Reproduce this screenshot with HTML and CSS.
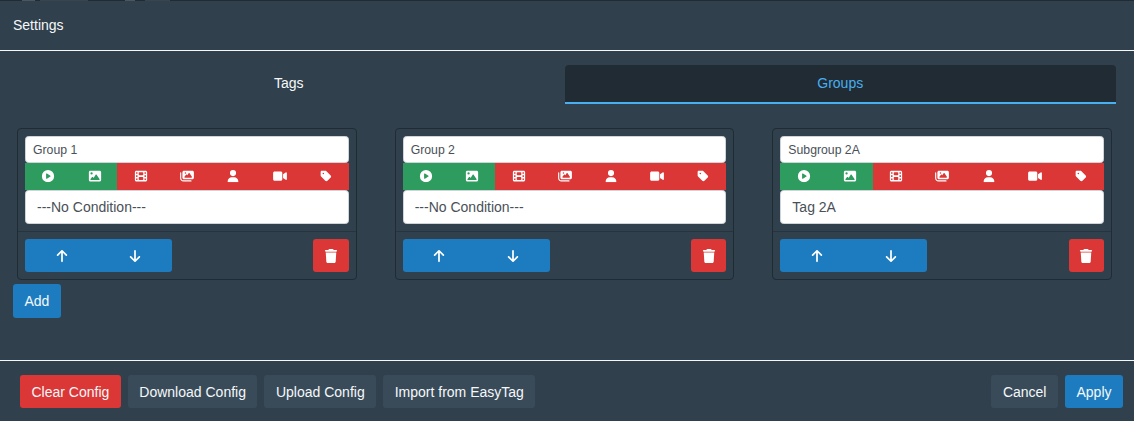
FILE: index.html
```html
<!DOCTYPE html>
<html lang="en">
<head>
<meta charset="utf-8">
<title>Settings</title>
<link rel="stylesheet" href="styles.css">
</head>
<body>
<svg class="defs" aria-hidden="true">
<symbol id="i-play" viewBox="0 0 512 512"><path d="M0 256a256 256 0 1 1 512 0A256 256 0 1 1 0 256zM188.3 147.1c-7.6 4.2-12.3 12.3-12.3 20.9V344c0 8.7 4.7 16.7 12.3 20.9s16.8 4.1 24.3-.5l144-88c7.1-4.4 11.5-12.1 11.5-20.5s-4.4-16.1-11.5-20.5l-144-88c-7.4-4.5-16.7-4.7-24.3-.5z"/></symbol>
<symbol id="i-image" viewBox="0 0 512 512"><path d="M0 96C0 60.7 28.7 32 64 32H448c35.3 0 64 28.7 64 64V416c0 35.3-28.7 64-64 64H64c-35.3 0-64-28.7-64-64V96zM323.8 202.5c-4.5-6.6-11.9-10.5-19.8-10.5s-15.4 3.9-19.8 10.5l-87 127.6L170.7 297c-4.6-5.7-11.5-9-18.7-9s-14.2 3.3-18.7 9l-64 80c-5.8 7.2-6.9 17.1-2.9 25.4s12.4 13.6 21.6 13.6h96 32H424c8.9 0 17.1-4.9 21.2-12.8s3.6-17.4-1.4-24.7l-120-176zM112 192a48 48 0 1 0 0-96 48 48 0 1 0 0 96z"/></symbol>
<symbol id="i-film" viewBox="0 0 512 512"><path d="M0 96C0 60.7 28.7 32 64 32H448c35.3 0 64 28.7 64 64V416c0 35.3-28.7 64-64 64H64c-35.3 0-64-28.7-64-64V96zM48 368v32c0 8.8 7.2 16 16 16H96c8.8 0 16-7.2 16-16V368c0-8.8-7.2-16-16-16H64c-8.8 0-16 7.2-16 16zm368-16c-8.8 0-16 7.2-16 16v32c0 8.8 7.2 16 16 16h32c8.8 0 16-7.2 16-16V368c0-8.8-7.2-16-16-16H416zM48 240v32c0 8.8 7.2 16 16 16H96c8.8 0 16-7.2 16-16V240c0-8.8-7.2-16-16-16H64c-8.8 0-16 7.2-16 16zm368-16c-8.8 0-16 7.2-16 16v32c0 8.8 7.2 16 16 16h32c8.8 0 16-7.2 16-16V240c0-8.8-7.2-16-16-16H416zM48 112v32c0 8.8 7.2 16 16 16H96c8.8 0 16-7.2 16-16V112c0-8.8-7.2-16-16-16H64c-8.8 0-16 7.2-16 16zM416 96c-8.8 0-16 7.2-16 16v32c0 8.8 7.2 16 16 16h32c8.8 0 16-7.2 16-16V112c0-8.8-7.2-16-16-16H416zM160 128v64c0 17.7 14.3 32 32 32H320c17.7 0 32-14.3 32-32V128c0-17.7-14.3-32-32-32H192c-17.7 0-32 14.3-32 32zm32 160c-17.7 0-32 14.3-32 32v64c0 17.7 14.3 32 32 32H320c17.7 0 32-14.3 32-32V320c0-17.7-14.3-32-32-32H192z"/></symbol>
<symbol id="i-images" viewBox="0 0 576 512"><path d="M160 32c-35.3 0-64 28.7-64 64V320c0 35.3 28.7 64 64 64H512c35.3 0 64-28.7 64-64V96c0-35.3-28.7-64-64-64H160zM396 138.7l96 144c4.9 7.4 5.4 16.8 1.2 24.6S480.9 320 472 320H328 280 200c-9.2 0-17.6-5.3-21.6-13.6s-2.9-18.2 2.9-25.4l64-80c4.6-5.7 11.4-9 18.7-9s14.2 3.3 18.7 9l17.3 21.6 56-84C360.5 132 368 128 376 128s15.5 4 20 10.7zM192 128a32 32 0 1 1 64 0 32 32 0 1 1 -64 0zM48 120c0-13.3-10.7-24-24-24S0 106.7 0 120V344c0 75.1 60.9 136 136 136H456c13.3 0 24-10.7 24-24s-10.7-24-24-24H136c-48.6 0-88-39.4-88-88V120z"/></symbol>
<symbol id="i-user" viewBox="0 0 448 512"><path d="M224 256A128 128 0 1 0 224 0a128 128 0 1 0 0 256zm-45.7 48C79.8 304 0 383.8 0 482.3C0 498.7 13.3 512 29.7 512H418.3c16.4 0 29.7-13.3 29.7-29.7C448 383.8 368.2 304 269.7 304H178.3z"/></symbol>
<symbol id="i-video" viewBox="0 0 576 512"><path d="M0 128C0 92.7 28.7 64 64 64H320c35.3 0 64 28.7 64 64V384c0 35.3-28.7 64-64 64H64c-35.3 0-64-28.7-64-64V128zM559.1 99.8c10.4 5.6 16.9 16.4 16.9 28.2V384c0 11.8-6.5 22.6-16.9 28.2s-23 5-32.9-1.6l-96-64L416 337.1V320 192 174.9l14.2-9.5 96-64c9.8-6.5 22.4-7.2 32.9-1.6z"/></symbol>
<symbol id="i-tag" viewBox="0 0 448 512"><path d="M0 80V229.5c0 17 6.7 33.3 18.7 45.3l176 176c25 25 65.5 25 90.5 0L418.7 317.3c25-25 25-65.5 0-90.5l-176-176c-12-12-28.3-18.7-45.3-18.7H48C21.5 32 0 53.5 0 80zm112 32a32 32 0 1 1 0 64 32 32 0 1 1 0-64z"/></symbol>
<symbol id="i-up" viewBox="0 0 384 512"><path d="M214.6 41.4c-12.5-12.5-32.8-12.5-45.3 0l-160 160c-12.5 12.5-12.5 32.8 0 45.3s32.8 12.5 45.3 0L160 141.2V448c0 17.7 14.3 32 32 32s32-14.3 32-32V141.2L329.4 246.6c12.5 12.5 32.8 12.5 45.3 0s12.5-32.8 0-45.3l-160-160z"/></symbol>
<symbol id="i-down" viewBox="0 0 384 512"><path d="M169.4 470.6c12.5 12.5 32.8 12.5 45.3 0l160-160c12.5-12.5 12.5-32.8 0-45.3s-32.8-12.5-45.3 0L224 370.8 224 64c0-17.7-14.3-32-32-32s-32 14.3-32 32l0 306.7L54.6 265.4c-12.5-12.5-32.8-12.5-45.3 0s-12.5 32.8 0 45.3l160 160z"/></symbol>
<symbol id="i-trash" viewBox="0 0 448 512"><path d="M135.2 17.7L128 32H32C14.3 32 0 46.3 0 64S14.3 96 32 96H416c17.7 0 32-14.3 32-32s-14.3-32-32-32H320l-7.2-14.3C307.4 6.8 296.3 0 284.2 0H163.8c-12.1 0-23.2 6.8-28.6 17.7zM416 128H32L53.2 467c1.6 25.3 22.6 45 47.9 45H346.9c25.3 0 46.3-19.7 47.9-45L416 128z"/></symbol>
</svg>
<div class="behind" aria-hidden="true"><i class="sw s1"></i><i class="sw s2"></i><i class="sw s3"></i><i class="sw s4"></i></div>
<div class="modal">
  <header class="modal-header">Settings</header>
  <main class="modal-body">
    <nav class="tabs">
      <a class="tab">Tags</a>
      <a class="tab tab-active">Groups</a>
    </nav>
    <section class="cards">
      <article class="card">
        <div class="card-body">
          <input class="name" value="Group 1">
          <div class="toggles">
            <span class="t on"><svg class="ic-sm"><use href="#i-play"/></svg></span>
            <span class="t on"><svg class="ic-sm"><use href="#i-image"/></svg></span>
            <span class="t"><svg class="ic-sm"><use href="#i-film"/></svg></span>
            <span class="t"><svg class="ic-sm"><use href="#i-images"/></svg></span>
            <span class="t"><svg class="ic-sm"><use href="#i-user"/></svg></span>
            <span class="t"><svg class="ic-sm"><use href="#i-video"/></svg></span>
            <span class="t"><svg class="ic-sm"><use href="#i-tag"/></svg></span>
          </div>
          <div class="cond">---No Condition---</div>
        </div>
        <div class="card-foot">
          <div class="move"><button class="mv"><svg class="ic"><use href="#i-up"/></svg></button><button class="mv"><svg class="ic"><use href="#i-down"/></svg></button></div>
          <button class="del"><svg class="ic"><use href="#i-trash"/></svg></button>
        </div>
      </article>
      <article class="card">
        <div class="card-body">
          <input class="name" value="Group 2">
          <div class="toggles">
            <span class="t on"><svg class="ic-sm"><use href="#i-play"/></svg></span>
            <span class="t on"><svg class="ic-sm"><use href="#i-image"/></svg></span>
            <span class="t"><svg class="ic-sm"><use href="#i-film"/></svg></span>
            <span class="t"><svg class="ic-sm"><use href="#i-images"/></svg></span>
            <span class="t"><svg class="ic-sm"><use href="#i-user"/></svg></span>
            <span class="t"><svg class="ic-sm"><use href="#i-video"/></svg></span>
            <span class="t"><svg class="ic-sm"><use href="#i-tag"/></svg></span>
          </div>
          <div class="cond">---No Condition---</div>
        </div>
        <div class="card-foot">
          <div class="move"><button class="mv"><svg class="ic"><use href="#i-up"/></svg></button><button class="mv"><svg class="ic"><use href="#i-down"/></svg></button></div>
          <button class="del"><svg class="ic"><use href="#i-trash"/></svg></button>
        </div>
      </article>
      <article class="card">
        <div class="card-body">
          <input class="name" value="Subgroup 2A">
          <div class="toggles">
            <span class="t on"><svg class="ic-sm"><use href="#i-play"/></svg></span>
            <span class="t on"><svg class="ic-sm"><use href="#i-image"/></svg></span>
            <span class="t"><svg class="ic-sm"><use href="#i-film"/></svg></span>
            <span class="t"><svg class="ic-sm"><use href="#i-images"/></svg></span>
            <span class="t"><svg class="ic-sm"><use href="#i-user"/></svg></span>
            <span class="t"><svg class="ic-sm"><use href="#i-video"/></svg></span>
            <span class="t"><svg class="ic-sm"><use href="#i-tag"/></svg></span>
          </div>
          <div class="cond">Tag 2A</div>
        </div>
        <div class="card-foot">
          <div class="move"><button class="mv"><svg class="ic"><use href="#i-up"/></svg></button><button class="mv"><svg class="ic"><use href="#i-down"/></svg></button></div>
          <button class="del"><svg class="ic"><use href="#i-trash"/></svg></button>
        </div>
      </article>
    </section>
    <button class="btn primary add">Add</button>
  </main>
  <footer class="modal-footer">
    <div class="group">
      <button class="btn danger">Clear Config</button>
      <button class="btn secondary">Download Config</button>
      <button class="btn secondary">Upload Config</button>
      <button class="btn secondary">Import from EasyTag</button>
    </div>
    <div class="group">
      <button class="btn secondary">Cancel</button>
      <button class="btn primary">Apply</button>
    </div>
  </footer>
</div>
</body>
</html>
```
FILE: styles.css
```css
* { box-sizing: border-box; }
html, body { margin: 0; padding: 0; height: 100%; }
body {
  background: #202b33;
  font-family: "Liberation Sans", Arial, sans-serif;
  font-size: 14px;
  color: #f5f8fa;
  overflow: hidden;
}
.defs { display: none; }
.behind { display: flex; height: 1px; padding-left: 22px; }
.sw { display: block; height: 1px; background: #4a5660; }
.s1 { width: 13px; margin-right: 5px; }
.s2 { width: 48px; margin-right: 37px; background: #39454e; }
.s3 { width: 10px; margin-right: 10px; }
.s4 { width: 25px; background: #39454e; }
.modal {
  height: 420px;
  background: #30404d;
  display: flex;
  flex-direction: column;
}
.modal-header {
  height: 50px;
  padding: 16px 13px 0;
  line-height: 17px;
  border-bottom: 1px solid #f5f8fa;
}
.modal-body { height: 309px; padding: 14px 18px 0 13px; }
.tabs { display: flex; height: 39px; }
.tab {
  flex: 1 1 0;
  text-align: center;
  line-height: 36px;
}
.tab-active {
  background: #202b33;
  color: #48aff0;
  border-bottom: 2px solid #48aff0;
  border-radius: 4px 4px 0 0;
}
.cards {
  display: flex;
  gap: 38px;
  margin-top: 24px;
  padding: 0 4px;
}
.card {
  flex: 1 1 0;
  height: 152px;
  border: 1px solid #202b33;
  border-radius: 4px;
}
.card-body { padding: 7px 7px 0; height: 103px; border-bottom: 1px solid #263440; }
.name {
  display: block;
  width: 100%;
  height: 27px;
  padding: 0 7px;
  border: 1px solid #ced4da;
  border-radius: 3.5px;
  background: #fff;
  color: #495057;
  font: 12.25px "Liberation Sans", Arial, sans-serif;
}
.toggles { display: flex; height: 27px; }
.t {
  flex: 1 1 0;
  padding-left: 0.5px;
  background: #db3737;
  color: #fff;
  display: flex;
  align-items: center;
  justify-content: center;
}
.t.on { background: #2e9b5f; }
.ic { width: 14px; height: 14px; fill: currentColor; display: block; }
.ic-sm { width: 14px; height: 12.25px; fill: currentColor; display: block; }
.cond {
  height: 34px;
  padding: 0 11px;
  line-height: 32px;
  background: #fff;
  color: #495057;
  border: 1px solid #ced4da;
  border-radius: 3.5px;
}
.card-foot {
  display: flex;
  justify-content: space-between;
  padding: 7px 7px 0;
}
.move { display: flex; width: 147px; border-radius: 3px; overflow: hidden; }
button { font: inherit; border: 0; cursor: pointer; }
.mv {
  flex: 1 1 0;
  height: 33px;
  background: #1c7cbf;
  color: #fff;
  display: flex;
  align-items: center;
  justify-content: center;
}
.del {
  width: 35.25px;
  height: 33px;
  padding: 0;
  background: #db3737;
  color: #fff;
  border-radius: 3px;
  display: flex;
  align-items: center;
  justify-content: center;
}
.btn {
  height: 33px;
  padding: 0 11.5px;
  border-radius: 3px;
  color: #f5f8fa;
}
.primary { background: #1c7cbf; }
.danger { background: #db3737; }
.secondary { background: #394b59; }
.add { display: block; height: 34px; margin-top: 4px; }
.modal-footer {
  border-top: 1px solid #f5f8fa;
  padding: 14px 11px 0 20px;
  display: flex;
  justify-content: space-between;
}
.group { display: flex; gap: 7px; }
```
